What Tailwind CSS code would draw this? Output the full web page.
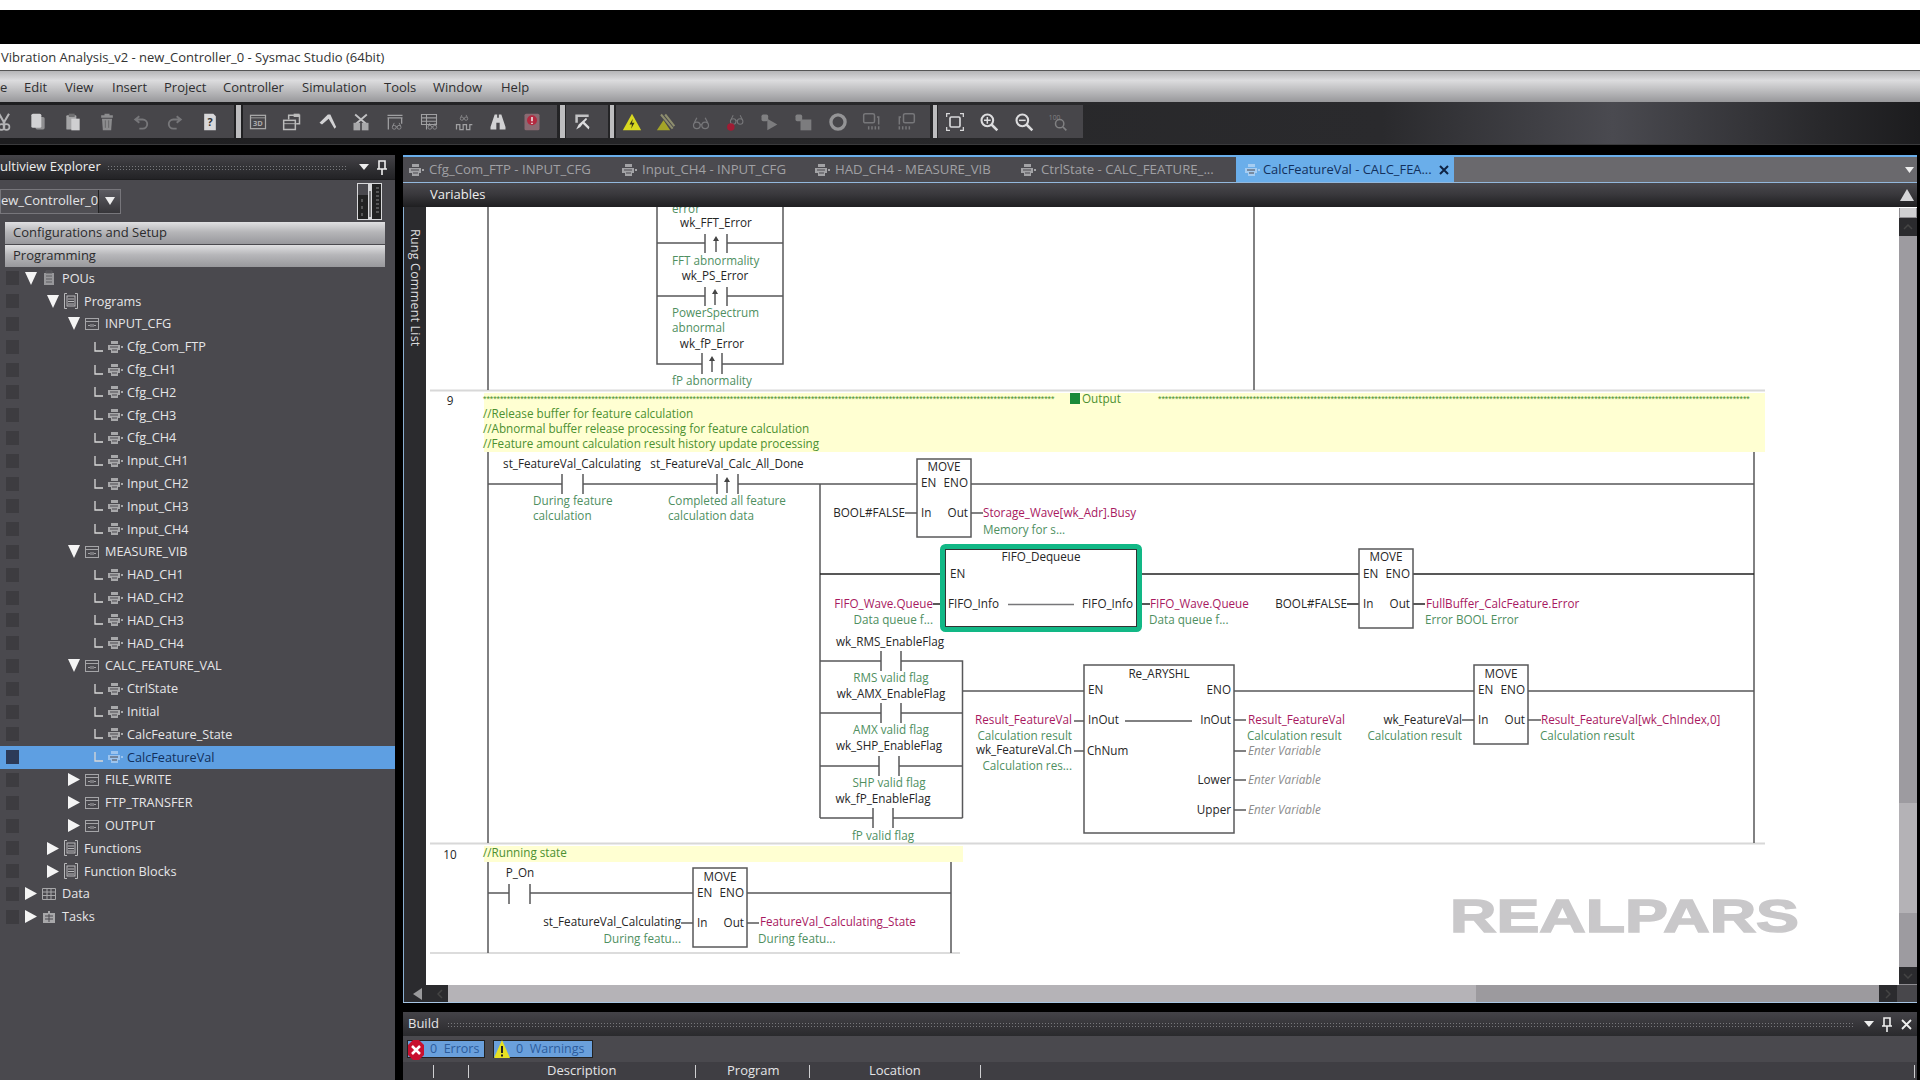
<!DOCTYPE html>
<html lang="en">
<head>
<meta charset="UTF-8" />
<title>Vibration Analysis_v2 - new_Controller_0 - Sysmac Studio (64bit)</title>
<script src="https://cdn.jsdelivr.net/npm/@tailwindcss/browser@4"></script>
</head>
<body class="w-[1920px] h-[1080px] overflow-hidden bg-black font-['Open_Sans',sans-serif] text-[12.5px] text-[#e4e4e6]">

<!-- shared icons -->
<svg class="hidden">
  <symbol id="rung" viewBox="0 0 16 14"><path d="M4 1h7v3H4zM1 5h12v5h-2v3H4v-3H1z" fill="currentColor"/><path d="M3 7h8M5 10h5" stroke="#4a494e"/><rect x="14" y="6" width="2" height="2" fill="currentColor"/></symbol>
  <symbol id="sect" viewBox="0 0 14 14"><rect x=".5" y="1.5" width="13" height="11" fill="none" stroke="#a5a5a8"/><path d="M.5 4.5h13" stroke="#a5a5a8"/><path d="M3 8.5h2M9 8.5h2M6 7v3M8 7v3" stroke="#a5a5a8"/></symbol>
  <symbol id="frame" viewBox="0 0 14 16"><path d="M3 .5H.5v15H3M11 .5h2.500v15H11" fill="none" stroke="#b8b8ba"/><rect x="3" y="3" width="8" height="10" fill="none" stroke="#b8b8ba"/><path d="M4 6h6M4 8.500h6M4 11h6" stroke="#b8b8ba"/></symbol>
  <symbol id="down" viewBox="0 0 12 13"><path d="M0 0h12L6 13z" fill="#f4f4f4"/></symbol>
  <symbol id="right" viewBox="0 0 12 13"><path d="M0 0l12 6.500L0 13z" fill="#f4f4f4"/></symbol>
  <symbol id="ell" viewBox="0 0 10 12"><path d="M1 1v9h8" fill="none" stroke="#d8d8d8" stroke-width="1.300"/></symbol>
  <symbol id="glasses" viewBox="0 0 24 24"><circle cx="7" cy="16" r="4" fill="none" stroke="currentColor" stroke-width="1.500"/><circle cx="17" cy="16" r="4" fill="none" stroke="currentColor" stroke-width="1.500"/><path d="M11 15h2M4 13L7 7M20 13L17 7" stroke="currentColor" stroke-width="1.500" fill="none"/></symbol>
</svg>

<div class="h-[10px] bg-white"></div>
<div class="h-[34px] bg-black"></div>
<div class="h-[27px] bg-white text-[#333] pl-px pt-[2px] flex items-center text-[13px] border-b border-[#555]">Vibration Analysis_v2 - new_Controller_0 - Sysmac Studio (64bit)</div>

<!-- menu -->
<div class="h-[31px] pt-[2px] bg-[linear-gradient(#b5b5b7,#dcdcde_30%,#c4c4c6_55%,#98989b)] flex items-center text-[#2e2e30] text-[13px]">
  <span class="w-[24px]">e</span><span class="w-[41px]">Edit</span><span class="w-[47px]">View</span><span class="w-[52px]">Insert</span><span class="w-[59px]">Project</span><span class="w-[79px]">Controller</span><span class="w-[82px]">Simulation</span><span class="w-[49px]">Tools</span><span class="w-[68px]">Window</span><span>Help</span>
</div>

<!-- toolbar -->
<div class="h-[43px] pt-[3px] bg-[linear-gradient(90deg,#1d1d1f,#28282a_50%,#2a2a2d_72%,#4a4a50_84%,#28282b_95%,#1c1c1e)] flex items-start text-[#b4b4b6] border-b border-[#3a3a3c]">
  <div class="w-[234px] h-[33px] bg-[#47464a] flex items-center gap-[14.3px] overflow-hidden">
    <svg class="w-5 h-5 -ml-[6px] shrink-0" viewBox="0 0 24 24"><path d="M6 2l7 12M18 2L11 14" stroke="currentColor" stroke-width="2.500"/><circle cx="9" cy="18" r="3.500" fill="none" stroke="currentColor" stroke-width="2"/><circle cx="15" cy="18" r="3.500" fill="none" stroke="currentColor" stroke-width="2"/></svg>
    <svg class="w-5 h-5 shrink-0" viewBox="0 0 24 24"><rect x="9" y="6" width="11" height="15" rx="2" fill="#8f8f91"/><rect x="4" y="2" width="12" height="17" rx="2" fill="#d2d2d4"/></svg>
    <svg class="w-5 h-5 shrink-0" viewBox="0 0 24 24"><rect x="4" y="4" width="12" height="17" rx="1" fill="#a5a5a7"/><rect x="7" y="2" width="7" height="4" fill="#6f6f71"/><rect x="10" y="8" width="10" height="14" fill="#cfcfd1"/></svg>
    <svg class="w-5 h-5 shrink-0" viewBox="0 0 24 24"><path d="M9 2h6v2h4v3H5V4h4z" fill="#8c8c8e"/><path d="M6 8h12l-1 14H7z" fill="#8c8c8e"/><path d="M10 10v9M14 10v9" stroke="#606062"/></svg>
    <svg class="w-5 h-5 shrink-0" viewBox="0 0 24 24"><path d="M10 5L5 9l5 4M5 9h9a5.500 5.500 0 0 1 0 11h-4" fill="none" stroke="#77777a" stroke-width="2.200"/></svg>
    <svg class="w-5 h-5 shrink-0" viewBox="0 0 24 24"><path d="M14 5l5 4-5 4M19 9h-9a5.500 5.500 0 0 0 0 11h4" fill="none" stroke="#77777a" stroke-width="2.200"/></svg>
    <svg class="w-5 h-5 shrink-0" viewBox="0 0 24 24"><path d="M5 2h11l3 3v17H5z" fill="#d8d8da"/><text x="12" y="17" text-anchor="middle" font-size="13" font-weight="700" fill="#333">?</text></svg>
  </div>
  <div class="w-[5px] h-[33px] ml-[2px] bg-[#bdbdbf]"></div>
  <div class="w-[314px] h-[33px] ml-[2px] bg-[#47464a] flex items-center gap-[14.3px] pl-[5px]">
    <svg class="w-5 h-5 shrink-0" viewBox="0 0 24 24"><rect x="3" y="4" width="18" height="16" fill="none" stroke="#aaa" stroke-width="1.500"/><path d="M3 7h18" stroke="#aaa"/><text x="12" y="17" text-anchor="middle" font-size="9" font-weight="700" fill="#aaa">3D</text></svg>
    <svg class="w-5 h-5 shrink-0" viewBox="0 0 24 24"><rect x="2" y="10" width="14" height="11" fill="none" stroke="#bbb" stroke-width="1.800"/><path d="M2 14h14" stroke="#bbb"/><path d="M8 9V4h13v10h-4" fill="none" stroke="#bbb" stroke-width="1.800"/><rect x="14" y="2" width="7" height="4" fill="#bbb"/></svg>
    <svg class="w-5 h-5 shrink-0" viewBox="0 0 24 24"><path d="M13 3L3 13l3 2 8-7 7 12 2-2L16 3z" fill="#d2d2d4"/></svg>
    <svg class="w-5 h-5 shrink-0" viewBox="0 0 24 24"><path d="M5 3l14 12M19 3L5 15" stroke="#c2c2c4" stroke-width="2.200"/><rect x="3" y="13" width="8" height="9" fill="#a8a8aa"/><rect x="13" y="13" width="8" height="9" fill="#a8a8aa"/></svg>
    <svg class="w-5 h-5 shrink-0 text-[#a0a0a2]" viewBox="0 0 24 24"><path d="M3 4h18M3 7h18M4 7v14M20 7v7" stroke="currentColor" stroke-width="1.500"/><use href="#glasses" x="7" y="9" width="14" height="14"/></svg>
    <svg class="w-5 h-5 shrink-0 text-[#a0a0a2]" viewBox="0 0 24 24"><path d="M3 3h18v12H3zM3 7h18M3 11h18M9 3v18" fill="none" stroke="currentColor" stroke-width="1.300"/><use href="#glasses" x="9" y="9" width="14" height="14"/></svg>
    <svg class="w-5 h-5 shrink-0 text-[#a0a0a2]" viewBox="0 0 24 24"><use href="#glasses" x="6" y="0" width="12" height="12"/><path d="M3 21v-6h4v6h4v-6h4v6h4v-6h3" fill="none" stroke="currentColor" stroke-width="1.500"/></svg>
    <svg class="w-5 h-5 shrink-0" viewBox="0 0 24 24"><path d="M8 3h3v4h2V3h3l5 15v3h-7v-8h-4v8H3v-3z" fill="#d2d2d4"/></svg>
    <svg class="w-5 h-5 shrink-0" viewBox="0 0 24 24"><rect x="3" y="2" width="18" height="20" rx="2" fill="#8a6a72"/><circle cx="12" cy="10" r="6" fill="#b4283f"/><path d="M12 6v5M12 13v1.500" stroke="#eee" stroke-width="1.800"/></svg>
  </div>
  <div class="w-[5px] h-[33px] ml-[3px] bg-[#bdbdbf]"></div>
  <div class="w-[42px] h-[33px] ml-px bg-[#47464a] flex items-center pl-[6px]">
    <svg class="w-5 h-5 shrink-0" viewBox="0 0 24 24"><path d="M4 3h16v3H7v7H4z" fill="#c2c2c4"/><path d="M17 7L8 15l-3 6 5-3 3-4 7 7 1-3-6-6 3-3z" fill="#dcdcde"/></svg>
  </div>
  <div class="w-[4px] h-[33px] ml-[2px] bg-[#bdbdbf]"></div>
  <div class="w-[314px] h-[33px] ml-[2px] bg-[#47464a] flex items-center gap-[14.3px] pl-[6px]">
    <svg class="w-5 h-5 shrink-0" viewBox="0 0 24 24"><path d="M12 2l11 20H1z" fill="#d8d820"/><path d="M13 8l-4 7h3l-1 5 4-7h-3z" fill="#35351a"/></svg>
    <svg class="w-5 h-5 shrink-0" viewBox="0 0 24 24"><path d="M9 10l8 12H1z" fill="#a4a428"/><path d="M6 3l14 17M11 3l11 14" stroke="#8d8d6e" stroke-width="2.500"/></svg>
    <svg class="w-5 h-5 shrink-0 text-[#77777a]" viewBox="0 0 24 24"><use href="#glasses" x="0" y="0" width="24" height="24"/></svg>
    <svg class="w-5 h-5 shrink-0 text-[#77777a]" viewBox="0 0 24 24"><use href="#glasses" x="4" y="-2" width="20" height="20"/><circle cx="7" cy="18" r="4.500" fill="#a01c34"/></svg>
    <svg class="w-5 h-5 shrink-0" viewBox="0 0 24 24"><rect x="3" y="3" width="8" height="8" rx="2" fill="#808082"/><path d="M10 8l12 7-12 7z" fill="#7c7c7e"/></svg>
    <svg class="w-5 h-5 shrink-0" viewBox="0 0 24 24"><rect x="3" y="3" width="8" height="8" rx="2" fill="#808082"/><rect x="9" y="9" width="13" height="13" fill="#7c7c7e"/></svg>
    <svg class="w-5 h-5 shrink-0" viewBox="0 0 24 24"><circle cx="12" cy="12" r="8.500" fill="none" stroke="#949496" stroke-width="4"/></svg>
    <svg class="w-5 h-5 shrink-0" viewBox="0 0 24 24"><rect x="2" y="2" width="13" height="11" rx="2" fill="none" stroke="#77777a" stroke-width="1.800"/><path d="M18 6h2v9M8 21v-4M12 21v-4M16 21v-4M20 21v-4" stroke="#77777a" stroke-width="1.800" fill="none"/></svg>
    <svg class="w-5 h-5 shrink-0" viewBox="0 0 24 24"><rect x="9" y="2" width="13" height="11" rx="2" fill="none" stroke="#77777a" stroke-width="1.800"/><path d="M6 6H4v9M4 21v-4M8 21v-4M12 21v-4M16 21v-4" stroke="#77777a" stroke-width="1.800" fill="none"/></svg>
  </div>
  <div class="w-[4px] h-[33px] ml-[3px] bg-[#bdbdbf]"></div>
  <div class="w-[145px] h-[33px] ml-px bg-[#47464a] flex items-center gap-[14.3px] pl-[7px]">
    <svg class="w-5 h-5 shrink-0" viewBox="0 0 24 24"><rect x="6" y="6" width="12" height="12" rx="1.500" fill="none" stroke="#d8d8da" stroke-width="2"/><path d="M2 6V2h4M18 2h4v4M2 18v4h4M18 22h4v-4" fill="none" stroke="#d8d8da" stroke-width="1.500"/></svg>
    <svg class="w-5 h-5 shrink-0" viewBox="0 0 24 24"><circle cx="10" cy="10" r="7" fill="none" stroke="#dcdcde" stroke-width="2.500"/><path d="M15 15l7 7" stroke="#dcdcde" stroke-width="3"/><path d="M6 10h8M10 6v8" stroke="#dcdcde" stroke-width="1.800"/></svg>
    <svg class="w-5 h-5 shrink-0" viewBox="0 0 24 24"><circle cx="10" cy="10" r="7" fill="none" stroke="#dcdcde" stroke-width="2.500"/><path d="M15 15l7 7" stroke="#dcdcde" stroke-width="3"/><path d="M6 10h8" stroke="#dcdcde" stroke-width="1.800"/></svg>
    <svg class="w-5 h-5 shrink-0" viewBox="0 0 24 24"><circle cx="14" cy="14" r="5" fill="none" stroke="#808082" stroke-width="1.800"/><path d="M18 18l4 4" stroke="#808082" stroke-width="2"/><text x="1" y="9" font-size="8" fill="#808082">100</text></svg>
  </div>
</div>

<div class="h-[10px] bg-black"></div>

<div class="flex h-[925px]">
  <!-- multiview explorer -->
  <aside class="w-[395px] shrink-0 bg-[#4a494e]">
    <div class="h-[25px] flex items-center bg-[linear-gradient(#444348,#2c2c2f_70%,#232326)] border-b border-[#1d1d1f] text-[13px] text-[#eee]">
      <span>ultiview Explorer</span>
      <span class="flex-1 h-[5px] ml-[6px] mr-[12px] bg-[radial-gradient(#77777b_0.7px,transparent_0.8px)] bg-[length:3px_3px]"></span>
      <svg class="w-[10px] h-[6px]" viewBox="0 0 10 6"><path d="M0 0h10L5 6z" fill="#eee"/></svg>
      <svg class="w-[12px] h-[15px] ml-[7px] mr-[7px]" viewBox="0 0 12 15"><path d="M3 1h6v8H3zM1 9h10M6 9v6" fill="none" stroke="#eee" stroke-width="1.600"/></svg>
    </div>
    <div class="h-[42px] flex items-center relative">
      <div class="w-[121px] h-[25px] bg-[#4f4e53] border border-[#77767b] flex items-center text-[13px]">
        <span class="w-[97px] whitespace-nowrap">ew_Controller_0</span>
        <span class="w-[23px] h-full bg-[linear-gradient(#5c5b61,#37363a)] border-l border-[#222] flex items-center justify-center">
          <svg class="w-[10px] h-[8px]" viewBox="0 0 10 8"><path d="M0 0h10L5 8z" fill="#eee"/></svg>
        </span>
      </div>
      <svg class="absolute left-[357px] top-[3px] w-[25px] h-[37px]" viewBox="0 0 25 37">
        <rect width="25" height="37" fill="#d8d8da"/><rect x="1" y="1" width="10" height="35" fill="#222"/><rect x="1" y="1" width="10" height="11" fill="#4a494e"/><rect x="15" y="1" width="9" height="35" fill="#222"/><rect x="12" y="8" width="2" height="26" fill="#777"/><path d="M5 16v3M5 23v3M5 30v3M19 5h3M19 9h3M19 13h3M19 17h3M19 21h3M19 25h3M19 29h3" stroke="#888"/>
      </svg>
    </div>
    <div class="ml-[5px] w-[380px] h-[22px] bg-[linear-gradient(#e0e0e2,#b6b6b9_45%,#98989c)] flex items-center pl-2 text-[#2b2b2d] text-[13px]">Configurations and Setup</div>
    <div class="ml-[5px] mt-px w-[380px] h-[22px] bg-[linear-gradient(#e0e0e2,#b6b6b9_45%,#98989c)] flex items-center pl-2 text-[#2b2b2d] text-[13px]">Programming</div>

    <div class="text-[12.7px] text-[#e6e6e8]">
      <div class="h-[22.8px] flex items-center"><span class="ml-[6px] w-[13px] h-[14px] bg-[#3d3c40]"></span><svg class="ml-[6px] w-3 h-[13px]"><use href="#down"/></svg><svg class="ml-[5px] w-[14px] h-[16px]" viewBox="0 0 14 16"><path d="M2 3h10v12H2z" fill="#98989b"/><path d="M4 1h6v2H4zM4 6h6M4 9h6M4 12h6" stroke="#5c5c60" fill="none"/></svg><span class="ml-[6px]">POUs</span></div>
      <div class="h-[22.8px] flex items-center"><span class="ml-[6px] w-[13px] h-[14px] bg-[#3d3c40]"></span><svg class="ml-[28px] w-3 h-[13px]"><use href="#down"/></svg><svg class="ml-[5px] w-[14px] h-[16px]"><use href="#frame"/></svg><span class="ml-[6px]">Programs</span></div>
      <div class="h-[22.8px] flex items-center"><span class="ml-[6px] w-[13px] h-[14px] bg-[#3d3c40]"></span><svg class="ml-[49px] w-3 h-[13px]"><use href="#down"/></svg><svg class="ml-[5px] w-[14px] h-[14px]"><use href="#sect"/></svg><span class="ml-[6px]">INPUT_CFG</span></div>
      <div class="h-[22.8px] flex items-center"><span class="ml-[6px] w-[13px] h-[14px] bg-[#3d3c40]"></span><svg class="ml-[75px] w-[10px] h-[12px]"><use href="#ell"/></svg><svg class="ml-[3px] w-[16px] h-[14px] text-[#a8a8aa]"><use href="#rung"/></svg><span class="ml-1">Cfg_Com_FTP</span></div>
      <div class="h-[22.8px] flex items-center"><span class="ml-[6px] w-[13px] h-[14px] bg-[#3d3c40]"></span><svg class="ml-[75px] w-[10px] h-[12px]"><use href="#ell"/></svg><svg class="ml-[3px] w-[16px] h-[14px] text-[#a8a8aa]"><use href="#rung"/></svg><span class="ml-1">Cfg_CH1</span></div>
      <div class="h-[22.8px] flex items-center"><span class="ml-[6px] w-[13px] h-[14px] bg-[#3d3c40]"></span><svg class="ml-[75px] w-[10px] h-[12px]"><use href="#ell"/></svg><svg class="ml-[3px] w-[16px] h-[14px] text-[#a8a8aa]"><use href="#rung"/></svg><span class="ml-1">Cfg_CH2</span></div>
      <div class="h-[22.8px] flex items-center"><span class="ml-[6px] w-[13px] h-[14px] bg-[#3d3c40]"></span><svg class="ml-[75px] w-[10px] h-[12px]"><use href="#ell"/></svg><svg class="ml-[3px] w-[16px] h-[14px] text-[#a8a8aa]"><use href="#rung"/></svg><span class="ml-1">Cfg_CH3</span></div>
      <div class="h-[22.8px] flex items-center"><span class="ml-[6px] w-[13px] h-[14px] bg-[#3d3c40]"></span><svg class="ml-[75px] w-[10px] h-[12px]"><use href="#ell"/></svg><svg class="ml-[3px] w-[16px] h-[14px] text-[#a8a8aa]"><use href="#rung"/></svg><span class="ml-1">Cfg_CH4</span></div>
      <div class="h-[22.8px] flex items-center"><span class="ml-[6px] w-[13px] h-[14px] bg-[#3d3c40]"></span><svg class="ml-[75px] w-[10px] h-[12px]"><use href="#ell"/></svg><svg class="ml-[3px] w-[16px] h-[14px] text-[#a8a8aa]"><use href="#rung"/></svg><span class="ml-1">Input_CH1</span></div>
      <div class="h-[22.8px] flex items-center"><span class="ml-[6px] w-[13px] h-[14px] bg-[#3d3c40]"></span><svg class="ml-[75px] w-[10px] h-[12px]"><use href="#ell"/></svg><svg class="ml-[3px] w-[16px] h-[14px] text-[#a8a8aa]"><use href="#rung"/></svg><span class="ml-1">Input_CH2</span></div>
      <div class="h-[22.8px] flex items-center"><span class="ml-[6px] w-[13px] h-[14px] bg-[#3d3c40]"></span><svg class="ml-[75px] w-[10px] h-[12px]"><use href="#ell"/></svg><svg class="ml-[3px] w-[16px] h-[14px] text-[#a8a8aa]"><use href="#rung"/></svg><span class="ml-1">Input_CH3</span></div>
      <div class="h-[22.8px] flex items-center"><span class="ml-[6px] w-[13px] h-[14px] bg-[#3d3c40]"></span><svg class="ml-[75px] w-[10px] h-[12px]"><use href="#ell"/></svg><svg class="ml-[3px] w-[16px] h-[14px] text-[#a8a8aa]"><use href="#rung"/></svg><span class="ml-1">Input_CH4</span></div>
      <div class="h-[22.8px] flex items-center"><span class="ml-[6px] w-[13px] h-[14px] bg-[#3d3c40]"></span><svg class="ml-[49px] w-3 h-[13px]"><use href="#down"/></svg><svg class="ml-[5px] w-[14px] h-[14px]"><use href="#sect"/></svg><span class="ml-[6px]">MEASURE_VIB</span></div>
      <div class="h-[22.8px] flex items-center"><span class="ml-[6px] w-[13px] h-[14px] bg-[#3d3c40]"></span><svg class="ml-[75px] w-[10px] h-[12px]"><use href="#ell"/></svg><svg class="ml-[3px] w-[16px] h-[14px] text-[#a8a8aa]"><use href="#rung"/></svg><span class="ml-1">HAD_CH1</span></div>
      <div class="h-[22.8px] flex items-center"><span class="ml-[6px] w-[13px] h-[14px] bg-[#3d3c40]"></span><svg class="ml-[75px] w-[10px] h-[12px]"><use href="#ell"/></svg><svg class="ml-[3px] w-[16px] h-[14px] text-[#a8a8aa]"><use href="#rung"/></svg><span class="ml-1">HAD_CH2</span></div>
      <div class="h-[22.8px] flex items-center"><span class="ml-[6px] w-[13px] h-[14px] bg-[#3d3c40]"></span><svg class="ml-[75px] w-[10px] h-[12px]"><use href="#ell"/></svg><svg class="ml-[3px] w-[16px] h-[14px] text-[#a8a8aa]"><use href="#rung"/></svg><span class="ml-1">HAD_CH3</span></div>
      <div class="h-[22.8px] flex items-center"><span class="ml-[6px] w-[13px] h-[14px] bg-[#3d3c40]"></span><svg class="ml-[75px] w-[10px] h-[12px]"><use href="#ell"/></svg><svg class="ml-[3px] w-[16px] h-[14px] text-[#a8a8aa]"><use href="#rung"/></svg><span class="ml-1">HAD_CH4</span></div>
      <div class="h-[22.8px] flex items-center"><span class="ml-[6px] w-[13px] h-[14px] bg-[#3d3c40]"></span><svg class="ml-[49px] w-3 h-[13px]"><use href="#down"/></svg><svg class="ml-[5px] w-[14px] h-[14px]"><use href="#sect"/></svg><span class="ml-[6px]">CALC_FEATURE_VAL</span></div>
      <div class="h-[22.8px] flex items-center"><span class="ml-[6px] w-[13px] h-[14px] bg-[#3d3c40]"></span><svg class="ml-[75px] w-[10px] h-[12px]"><use href="#ell"/></svg><svg class="ml-[3px] w-[16px] h-[14px] text-[#a8a8aa]"><use href="#rung"/></svg><span class="ml-1">CtrlState</span></div>
      <div class="h-[22.8px] flex items-center"><span class="ml-[6px] w-[13px] h-[14px] bg-[#3d3c40]"></span><svg class="ml-[75px] w-[10px] h-[12px]"><use href="#ell"/></svg><svg class="ml-[3px] w-[16px] h-[14px] text-[#a8a8aa]"><use href="#rung"/></svg><span class="ml-1">Initial</span></div>
      <div class="h-[22.8px] flex items-center"><span class="ml-[6px] w-[13px] h-[14px] bg-[#3d3c40]"></span><svg class="ml-[75px] w-[10px] h-[12px]"><use href="#ell"/></svg><svg class="ml-[3px] w-[16px] h-[14px] text-[#a8a8aa]"><use href="#rung"/></svg><span class="ml-1">CalcFeature_State</span></div>
      <div class="h-[22.8px] flex items-center bg-[#5e9fe2] text-[#12305c]"><span class="ml-[6px] w-[13px] h-[14px] bg-[#2c3a58]"></span><svg class="ml-[75px] w-[10px] h-[12px]"><use href="#ell"/></svg><svg class="ml-[3px] w-[16px] h-[14px] text-[#9cc4ee]"><use href="#rung"/></svg><span class="ml-1">CalcFeatureVal</span></div>
      <div class="h-[22.8px] flex items-center"><span class="ml-[6px] w-[13px] h-[14px] bg-[#3d3c40]"></span><svg class="ml-[49px] w-3 h-[13px]"><use href="#right"/></svg><svg class="ml-[5px] w-[14px] h-[14px]"><use href="#sect"/></svg><span class="ml-[6px]">FILE_WRITE</span></div>
      <div class="h-[22.8px] flex items-center"><span class="ml-[6px] w-[13px] h-[14px] bg-[#3d3c40]"></span><svg class="ml-[49px] w-3 h-[13px]"><use href="#right"/></svg><svg class="ml-[5px] w-[14px] h-[14px]"><use href="#sect"/></svg><span class="ml-[6px]">FTP_TRANSFER</span></div>
      <div class="h-[22.8px] flex items-center"><span class="ml-[6px] w-[13px] h-[14px] bg-[#3d3c40]"></span><svg class="ml-[49px] w-3 h-[13px]"><use href="#right"/></svg><svg class="ml-[5px] w-[14px] h-[14px]"><use href="#sect"/></svg><span class="ml-[6px]">OUTPUT</span></div>
      <div class="h-[22.8px] flex items-center"><span class="ml-[6px] w-[13px] h-[14px] bg-[#3d3c40]"></span><svg class="ml-[28px] w-3 h-[13px]"><use href="#right"/></svg><svg class="ml-[5px] w-[14px] h-[16px]"><use href="#frame"/></svg><span class="ml-[6px]">Functions</span></div>
      <div class="h-[22.8px] flex items-center"><span class="ml-[6px] w-[13px] h-[14px] bg-[#3d3c40]"></span><svg class="ml-[28px] w-3 h-[13px]"><use href="#right"/></svg><svg class="ml-[5px] w-[14px] h-[16px]"><use href="#frame"/></svg><span class="ml-[6px]">Function Blocks</span></div>
      <div class="h-[22.8px] flex items-center"><span class="ml-[6px] w-[13px] h-[14px] bg-[#3d3c40]"></span><svg class="ml-[6px] w-3 h-[13px]"><use href="#right"/></svg><svg class="ml-[5px] w-[14px] h-[14px]" viewBox="0 0 14 14"><path d="M.5 1.500h13v11H.5zM.5 5h13M.5 8.500h13M5 1.500v11M9 1.500v11" fill="none" stroke="#a8a8aa"/></svg><span class="ml-[6px]">Data</span></div>
      <div class="h-[22.8px] flex items-center"><span class="ml-[6px] w-[13px] h-[14px] bg-[#3d3c40]"></span><svg class="ml-[6px] w-3 h-[13px]"><use href="#right"/></svg><svg class="ml-[5px] w-[14px] h-[14px]" viewBox="0 0 14 14"><path d="M1 3h5v-2h2v2h5v10H1z" fill="#a8a8aa"/><path d="M3 6h8M3 9h8M7 4v8" stroke="#4a494e"/></svg><span class="ml-[6px]">Tasks</span></div>
    </div>
  </aside>

  <div class="w-[8px] shrink-0"></div>

  <main class="w-[1514px] shrink-0 flex flex-col">
    <!-- tabs -->
    <div class="h-[27px] flex border-t-2 border-[#6aaeea] bg-[#6a696d] text-[13.2px] text-[#a0a0a4]">
      <div class="w-[210px] bg-[#4b4a4f] flex items-center pl-[5px]"><svg class="w-4 h-[14px] text-[#a2a2a5]"><use href="#rung"/></svg><span class="ml-[5px]">Cfg_Com_FTP - INPUT_CFG</span></div>
      <div class="w-[194px] bg-[#4b4a4f] flex items-center pl-2"><svg class="w-4 h-[14px] text-[#a2a2a5]"><use href="#rung"/></svg><span class="ml-[5px]">Input_CH4 - INPUT_CFG</span></div>
      <div class="w-[206px] bg-[#4b4a4f] flex items-center pl-[7px]"><svg class="w-4 h-[14px] text-[#a2a2a5]"><use href="#rung"/></svg><span class="ml-[5px]">HAD_CH4 - MEASURE_VIB</span></div>
      <div class="w-[223px] bg-[#4b4a4f] flex items-center pl-[7px]"><svg class="w-4 h-[14px] text-[#a2a2a5]"><use href="#rung"/></svg><span class="ml-[5px]">CtrlState - CALC_FEATURE_...</span></div>
      <div class="w-[218px] bg-[#6aaeea] text-[#12305c] text-[12.9px] flex items-center pl-2"><svg class="w-4 h-[14px] text-[#a6cdf2]"><use href="#rung"/></svg><span class="ml-[3px]">CalcFeatureVal - CALC_FEA...</span><svg class="w-[10px] h-[10px] ml-auto mr-[5px]" viewBox="0 0 10 10"><path d="M1 1l8 8M9 1L1 9" stroke="#0e2344" stroke-width="2"/></svg></div>
      <div class="flex-1 flex items-center justify-end pr-[3px]"><svg class="w-[9px] h-[6px]" viewBox="0 0 9 6"><path d="M0 0h9L4.500 6z" fill="#eee"/></svg></div>
    </div>
    <!-- variables -->
    <div class="h-[25px] flex items-center justify-between border-t border-[#93b8dc] bg-[linear-gradient(#49484d,#3a393d_45%,#1f1f21)] text-[#eee] text-[13px] pl-[27px] pr-[3px]">
      <span>Variables</span>
      <svg class="w-[14px] h-[12px]" viewBox="0 0 14 12"><path d="M0 12L7 0l7 12z" fill="#d5d5d7"/></svg>
    </div>

    <div class="flex h-[778px]">
      <div class="w-[23px] shrink-0 bg-[#2b2b2e] border-l border-[#8aaed0] flex justify-center pt-[22px]">
        <span class="[writing-mode:vertical-rl] text-[12.500px] text-[#dcdcde] tracking-[0.2px]">Rung Comment List</span>
      </div>

      <!-- ladder canvas: places here are the diagram content -->
      <svg class="w-[1473px] h-[778px] shrink-0 bg-white" viewBox="426 207 1473 778" fill="none">
        <rect x="484" y="393" width="1281" height="59" fill="#ffffd2"/>
        <rect x="484" y="846" width="479" height="16" fill="#ffffd2"/>
        <path d="M430 390.500H1765M430 843.500H1765" stroke="#d8d8d8" stroke-width="2"/>
        <path d="M430 953H960" stroke="#d0d0d0" stroke-width="1.500"/>

        <!-- wires -->
        <path stroke="#58585a" stroke-width="1.500" d="M488 207V390M1254 207V390M657 207V364H702M722 364H783V207M657 243H705M727 243H783M657 296H705M727 296H783M705 234V253M727 234V253M705 287V306M727 287V306M702 353V374M722 353V374M716 252V239M715 305V292M712 372V359
          M488 452V843M1754 452V843M488 484H562M583 484H717M738 484H917M971 484H1754M562 474V494M583 474V494M717 474V494M738 474V494M727 493V480M820 484V818
          M820 661H881M901 661H962.500V818M820 713H881M901 713H962.500M820 766H879M899 766H962.500M820 818H873M893 818H962.500M881 651V671M901 651V671M881 703V723M901 703V723M879 756V776M899 756V776M873 808V828M893 808V828
          M962.500 691H1084M1234 691H1474M1528 691H1754
          M905 513H917M971 513H983M1074 721H1084M1234 720H1246M1074 751H1084M1234 751H1246M1234 780H1246M1234 810H1246M1462 720H1474M1528 720H1541M1125 721H1192
          M488 862V953M951 862V953M488 893H509M530 893H693M747 893H951M509 884V904M530 884V904M681 923H693M747 923H759"/>
        <path fill="#444" d="M716 236l-3 5h6zM715 289l-3 5h6zM712 356l-3 5h6zM727 477l-3 5h6z"/>
        <path stroke="#222" stroke-width="1.500" d="M820 574H940M1142 574H1359M1413 574H1754M933 604H940M1142 604H1150M1347 604H1359M1413 604H1425"/>
        <path stroke="#77777a" stroke-width="1.500" d="M1008 604.500H1074"/>

        <!-- function blocks -->
        <g stroke="#58585a" stroke-width="1.500">
          <rect x="917" y="459" width="54" height="78"/>
          <rect x="1359" y="549" width="54" height="79"/>
          <rect x="1084" y="665" width="150" height="168"/>
          <rect x="1474" y="665" width="54" height="79"/>
          <rect x="693" y="868" width="54" height="79"/>
        </g>
        <rect x="942.500" y="546.500" width="197" height="83" rx="3" stroke="#12b886" stroke-width="5"/>
        <rect x="945.500" y="549.500" width="191" height="77" stroke="#333"/>

        <g transform="translate(0,4)" class="font-['Open_Sans',sans-serif] text-[11.7px]">
          <!-- labels -->
          <g fill="#262626">
            <text x="716" y="223" text-anchor="middle">wk_FFT_Error</text>
            <text x="715" y="276" text-anchor="middle">wk_PS_Error</text>
            <text x="712" y="344" text-anchor="middle">wk_fP_Error</text>
            <text x="450" y="401" text-anchor="middle">9</text>
            <text x="450" y="855" text-anchor="middle">10</text>
            <text x="572" y="464" text-anchor="middle">st_FeatureVal_Calculating</text>
            <text x="727" y="464" text-anchor="middle">st_FeatureVal_Calc_All_Done</text>
            <text x="905" y="513" text-anchor="end">BOOL#FALSE</text>
            <text x="944" y="467" text-anchor="middle">MOVE</text>
            <text x="921" y="483">EN</text><text x="968" y="483" text-anchor="end">ENO</text>
            <text x="921" y="513">In</text><text x="968" y="513" text-anchor="end">Out</text>
            <text x="1041" y="557" text-anchor="middle">FIFO_Dequeue</text>
            <text x="950" y="574">EN</text>
            <text x="948" y="604">FIFO_Info</text><text x="1133" y="604" text-anchor="end">FIFO_Info</text>
            <text x="1386" y="557" text-anchor="middle">MOVE</text>
            <text x="1363" y="574">EN</text><text x="1410" y="574" text-anchor="end">ENO</text>
            <text x="1363" y="604">In</text><text x="1410" y="604" text-anchor="end">Out</text>
            <text x="1347" y="604" text-anchor="end">BOOL#FALSE</text>
            <text x="890" y="642" text-anchor="middle">wk_RMS_EnableFlag</text>
            <text x="891" y="694" text-anchor="middle">wk_AMX_EnableFlag</text>
            <text x="889" y="746" text-anchor="middle">wk_SHP_EnableFlag</text>
            <text x="883" y="799" text-anchor="middle">wk_fP_EnableFlag</text>
            <text x="1159" y="674" text-anchor="middle">Re_ARYSHL</text>
            <text x="1088" y="690">EN</text><text x="1231" y="690" text-anchor="end">ENO</text>
            <text x="1088" y="720">InOut</text><text x="1231" y="720" text-anchor="end">InOut</text>
            <text x="1087" y="751">ChNum</text>
            <text x="1231" y="780" text-anchor="end">Lower</text>
            <text x="1231" y="810" text-anchor="end">Upper</text>
            <text x="1072" y="750" text-anchor="end">wk_FeatureVal.Ch</text>
            <text x="1462" y="720" text-anchor="end">wk_FeatureVal</text>
            <text x="1501" y="674" text-anchor="middle">MOVE</text>
            <text x="1478" y="690">EN</text><text x="1525" y="690" text-anchor="end">ENO</text>
            <text x="1478" y="720">In</text><text x="1525" y="720" text-anchor="end">Out</text>
            <text x="520" y="873" text-anchor="middle">P_On</text>
            <text x="720" y="877" text-anchor="middle">MOVE</text>
            <text x="697" y="893">EN</text><text x="744" y="893" text-anchor="end">ENO</text>
            <text x="697" y="923">In</text><text x="744" y="923" text-anchor="end">Out</text>
            <text x="681" y="922" text-anchor="end">st_FeatureVal_Calculating</text>
          </g>
          <!-- variables -->
          <g fill="#a8195f">
            <text x="983" y="513">Storage_Wave[wk_Adr].Busy</text>
            <text x="933" y="604" text-anchor="end">FIFO_Wave.Queue</text>
            <text x="1150" y="604">FIFO_Wave.Queue</text>
            <text x="1426" y="604">FullBuffer_CalcFeature.Error</text>
            <text x="1072" y="720" text-anchor="end">Result_FeatureVal</text>
            <text x="1248" y="720">Result_FeatureVal</text>
            <text x="1541" y="720">Result_FeatureVal[wk_ChIndex,0]</text>
            <text x="760" y="922">FeatureVal_Calculating_State</text>
          </g>
          <!-- comments -->
          <g fill="#4f8f5f">
            <text x="672" y="209">error</text>
            <text x="672" y="261">FFT abnormality</text>
            <text x="672" y="313">PowerSpectrum</text>
            <text x="672" y="328">abnormal</text>
            <text x="672" y="381">fP abnormality</text>
            <text x="533" y="501">During feature</text>
            <text x="533" y="516">calculation</text>
            <text x="668" y="501">Completed all feature</text>
            <text x="668" y="516">calculation data</text>
            <text x="983" y="530">Memory for s...</text>
            <text x="933" y="620" text-anchor="end">Data queue f...</text>
            <text x="1149" y="620">Data queue f...</text>
            <text x="1425" y="620">Error BOOL Error</text>
            <text x="891" y="678" text-anchor="middle">RMS valid flag</text>
            <text x="891" y="730" text-anchor="middle">AMX valid flag</text>
            <text x="889" y="783" text-anchor="middle">SHP valid flag</text>
            <text x="883" y="836" text-anchor="middle">fP valid flag</text>
            <text x="1072" y="736" text-anchor="end">Calculation result</text>
            <text x="1072" y="766" text-anchor="end">Calculation res...</text>
            <text x="1247" y="736">Calculation result</text>
            <text x="1462" y="736" text-anchor="end">Calculation result</text>
            <text x="1540" y="736">Calculation result</text>
            <text x="681" y="939" text-anchor="end">During featu...</text>
            <text x="758" y="939">During featu...</text>
          </g>
          <g fill="#8c8c8c" font-style="italic">
            <text x="1248" y="751">Enter Variable</text>
            <text x="1248" y="780">Enter Variable</text>
            <text x="1248" y="810">Enter Variable</text>
          </g>
          <!-- rung comments -->
          <g fill="#4c9030">
            <text x="483" y="414">//Release buffer for feature calculation</text>
            <text x="483" y="429">//Abnormal buffer release processing for feature calculation</text>
            <text x="483" y="444">//Feature amount calculation result history update processing</text>
            <text x="483" y="853">//Running state</text>
            <text x="1082" y="399">Output</text>
            <text id="stars1" x="483" y="398" font-family="Liberation Sans" font-size="8.7"></text>
            <text id="stars2" x="1158" y="398" font-family="Liberation Sans" font-size="8.7"></text>
          </g>
        </g>
        <rect x="1070" y="393" width="10" height="11" fill="#1a8a3a"/>

        <!-- watermark -->
        <text x="1450" y="932" font-family="Liberation Sans" font-weight="700" font-size="47" textLength="349" lengthAdjust="spacingAndGlyphs" fill="#c9c8ca" stroke="#c9c8ca" stroke-width="1.500">REALPARS</text>
      </svg>

      <!-- vertical scrollbar -->
      <div class="w-[18px] shrink-0 flex flex-col bg-[#8f8d91]">
        <div class="h-px bg-white"></div>
        <div class="h-[9px] mx-px bg-[#d0d0d2]"></div>
        <div class="h-[18px] mt-[1px] bg-[#2b2b2e] flex items-center justify-center"><svg class="w-[10px] h-[6px]" viewBox="0 0 10 6"><path d="M1 5l4-4 4 4" stroke="#444" stroke-width="1.500" fill="none"/></svg></div>
        <div class="h-[567px] bg-[#9d9ba0]"></div>
        <div class="h-[110px] bg-[#b4b2b6]"></div>
        <div class="h-[54px] bg-[#9d9ba0]"></div>
        <div class="h-[17px] bg-[#2b2b2e] flex items-center justify-center"><svg class="w-[10px] h-[6px]" viewBox="0 0 10 6"><path d="M1 1l4 4 4-4" stroke="#444" stroke-width="1.500" fill="none"/></svg></div>
      </div>
    </div>

    <!-- horizontal scrollbar -->
    <div class="h-[18px] flex bg-white border-b border-[#a8c6e4]">
      <div class="w-[28px] bg-[#2b2b2e] border-l border-[#8aaed0] flex items-center justify-center"><svg class="w-[9px] h-[12px]" viewBox="0 0 9 12"><path d="M9 0v12L0 6z" fill="#9a9a9c"/></svg></div>
      <div class="w-[17px] bg-[#2b2b2e] flex items-center justify-center"><svg class="w-[6px] h-[10px]" viewBox="0 0 6 10"><path d="M5 1L1 5l4 4" stroke="#444" stroke-width="1.500" fill="none"/></svg></div>
      <div class="w-[1028px] bg-[#b5b3b7]"></div>
      <div class="w-[403px] bg-[#9c9a9e]"></div>
      <div class="w-[18px] bg-[#2b2b2e] flex items-center justify-center"><svg class="w-[6px] h-[10px]" viewBox="0 0 6 10"><path d="M1 1l4 4-4 4" stroke="#444" stroke-width="1.500" fill="none"/></svg></div>
      <div class="w-[20px] bg-[#48474b]"></div>
    </div>

    <div class="h-[9px] bg-black"></div>

    <!-- build -->
    <div class="flex-1 bg-[#4a494e] text-[13px]">
      <div class="h-[24px] flex items-center bg-[linear-gradient(#444348,#333236_65%,#2a2a2d)] pl-[5px] text-[#e4e4e6]">
        <span>Build</span>
        <span class="flex-1 h-[5px] ml-[8px] mr-[9px] bg-[radial-gradient(#77777b_0.7px,transparent_0.8px)] bg-[length:3px_3px]"></span>
        <svg class="w-[10px] h-[6px]" viewBox="0 0 10 6"><path d="M0 0h10L5 6z" fill="#eee"/></svg>
        <svg class="w-[12px] h-[15px] ml-[7px]" viewBox="0 0 12 15"><path d="M3 1h6v8H3zM1 9h10M6 9v6" fill="none" stroke="#eee" stroke-width="1.600"/></svg>
        <svg class="w-[11px] h-[11px] ml-[8px] mr-[5px]" viewBox="0 0 11 11"><path d="M1 1l9 9M10 1l-9 9" stroke="#eee" stroke-width="1.800"/></svg>
      </div>
      <div class="h-[26px] flex items-center pl-[4px] gap-2 text-[#2c5c9c] text-[12.5px]">
        <div class="w-[78px] h-[18px] bg-[#6aa0dc] border border-[#222] flex items-center relative pl-[22px] whitespace-nowrap">
          <svg class="absolute -left-px -top-[2px] w-[18px] h-[22px]" viewBox="0 0 18 22"><path d="M6 1h6l5 5v10l-5 5H6l-5-5V6z" fill="#c8102e"/><path d="M5 7l8 8M13 7l-8 8" stroke="#fff" stroke-width="2.500"/></svg>
          <span>0&nbsp; Errors</span>
        </div>
        <div class="w-[100px] h-[18px] bg-[#6aa0dc] border border-[#222] flex items-center relative pl-[22px] whitespace-nowrap">
          <svg class="absolute -left-px -top-[2px] w-[18px] h-[20px]" viewBox="0 0 18 20"><path d="M9 1l8 18H1z" fill="#e6e022"/><path d="M9 7v7M9 15.500v2" stroke="#222" stroke-width="2"/></svg>
          <span>0&nbsp; Warnings</span>
        </div>
      </div>
      <div class="h-[18px] flex items-center bg-[#3f3e43] text-[#e4e4e6] relative">
        <span class="ml-[30px] w-[35px] h-[13px] border-l border-[#cfcfd1]"></span>
        <span class="w-[227px] h-[13px] border-l border-[#cfcfd1] pl-[78px] flex items-center">Description</span>
        <span class="w-[114px] h-[13px] border-l border-[#cfcfd1] pl-[31px] flex items-center">Program</span>
        <span class="w-[171px] h-[13px] border-l border-[#cfcfd1] pl-[59px] flex items-center">Location</span>
        <span class="h-[13px] border-l border-[#cfcfd1]"></span>
        <span class="absolute right-[2px] h-[13px] border-l border-[#cfcfd1]"></span>
      </div>
    </div>
  </main>
</div>

<script>
  // comment header stars of rung 9
  document.getElementById('stars1').textContent = '*'.repeat(169);
  document.getElementById('stars2').textContent = '*'.repeat(175);
</script>
</body>
</html>
